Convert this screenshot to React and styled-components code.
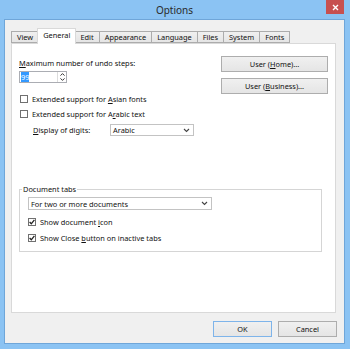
import styled, { createGlobalStyle } from "styled-components";

const GlobalStyle = createGlobalStyle`
  html, body {
    margin: 0;
    padding: 0;
  }
  body {
    width: 350px;
    height: 349px;
    overflow: hidden;
    font-family: "Noto Sans", "Open Sans", sans-serif;
  }
`;

const tabs = ["View", "General", "Edit", "Appearance", "Language", "Files", "System", "Fonts"];

const Chevron = () => (
  <svg width="7" height="5" viewBox="0 0 7 5">
    <path d="M1 1 L3.5 3.5 L6 1" fill="none" stroke="#444" strokeWidth="1.1" />
  </svg>
);

const Check = () => (
  <svg width="6" height="6" viewBox="0 0 6 6">
    <path d="M0.6 3 L2.3 4.8 L5.4 0.8" fill="none" stroke="#222" strokeWidth="1.3" />
  </svg>
);

const App = () => {
  return (
    <>
      <GlobalStyle />
      <Window>
        <TitleBar>
          <Title>Options</Title>
          <CloseButton>
            <svg width="7" height="7" viewBox="0 0 7 7">
              <path d="M1 1 L6 6 M6 1 L1 6" stroke="#ffffff" strokeWidth="1.4" />
            </svg>
          </CloseButton>
        </TitleBar>
        <Client>
          <TabStrip>
            {tabs.map((t) => (
              <Tab key={t} $active={t === "General"}>
                {t}
              </Tab>
            ))}
          </TabStrip>
          <Panel>
            <TopRow>
              <LeftColumn>
                <FieldLabel>
                  <Key>M</Key>aximum number of undo steps:
                </FieldLabel>
                <SpinBox>
                  <SpinText>
                    <Selected>99</Selected>
                  </SpinText>
                  <SpinArrows>
                    <svg width="5" height="3" viewBox="0 0 5 3">
                      <path d="M0.5 2.6 L2.5 0.6 L4.5 2.6" fill="none" stroke="#333" strokeWidth="1" />
                    </svg>
                    <svg width="5" height="3" viewBox="0 0 5 3">
                      <path d="M0.5 0.4 L2.5 2.4 L4.5 0.4" fill="none" stroke="#333" strokeWidth="1" />
                    </svg>
                  </SpinArrows>
                </SpinBox>
                <CheckRow $first>
                  <Box />
                  <span>
                    Extended support for <Key>A</Key>sian fonts
                  </span>
                </CheckRow>
                <CheckRow>
                  <Box />
                  <span>
                    Extended support for A<Key>r</Key>abic text
                  </span>
                </CheckRow>
                <DigitsRow>
                  <DigitsLabel>
                    <Key>D</Key>isplay of digits:
                  </DigitsLabel>
                  <Select $width={84} $height={12}>
                    <span>Arabic</span>
                    <Chevron />
                  </Select>
                </DigitsRow>
              </LeftColumn>
              <ButtonColumn>
                <Button $width={107}>
                  <span>
                    User (<Key>H</Key>ome)...
                  </span>
                </Button>
                <Button $width={107}>
                  <span>
                    User (<Key>B</Key>usiness)...
                  </span>
                </Button>
              </ButtonColumn>
            </TopRow>
            <Group>
              <Legend>Document tabs</Legend>
              <Select $width={184} $height={13}>
                <span>For two or more documents</span>
                <Chevron />
              </Select>
              <GroupCheck $first>
                <Box>
                  <Check />
                </Box>
                <span>
                  Show document <Key>i</Key>con
                </span>
              </GroupCheck>
              <GroupCheck>
                <Box>
                  <Check />
                </Box>
                <span>
                  Show Close <Key>b</Key>utton on inactive tabs
                </span>
              </GroupCheck>
            </Group>
          </Panel>
          <Footer>
            <Button $width={59} $default>
              OK
            </Button>
            <Button $width={59}>Cancel</Button>
          </Footer>
        </Client>
      </Window>
    </>
  );
};

export default App;

const Window = styled.div`
  width: 350px;
  height: 349px;
  box-sizing: border-box;
  background: #8bc3f3;
  padding: 0 6px 6px 5px;
  display: flex;
  flex-direction: column;
  font-size: 7.4px;
  color: #111;
`;

const TitleBar = styled.div`
  flex: none;
  height: 20px;
  display: flex;
  align-items: flex-start;
  padding-left: 18px;
`;

const Title = styled.div`
  flex: 1;
  text-align: center;
  font-size: 10px;
  line-height: 20px;
  color: #2a2a2a;
`;

const CloseButton = styled.div`
  flex: none;
  width: 18px;
  height: 14px;
  background-color: #c75050;
  display: flex;
  align-items: center;
  justify-content: center;
`;

const Client = styled.div`
  flex: 1;
  background: #f0f0f0;
  box-shadow: 0 0 0 1px #6fa6d9;
  padding: 8px 8px 6px 6px;
  display: flex;
  flex-direction: column;
`;

const TabStrip = styled.div`
  display: flex;
  align-items: flex-end;
  height: 15px;
`;

const Tab = styled.div`
  position: relative;
  box-sizing: border-box;
  height: ${(p) => (p.$active ? "16px" : "12px")};
  margin-bottom: ${(p) => (p.$active ? "-1px" : "0")};
  margin-left: ${(p) => (p.$active ? "-2px" : "-1px")};
  margin-right: ${(p) => (p.$active ? "-1px" : "0")};
  padding: 0 ${(p) => (p.$active ? "5px" : "5px")};
  border: 1px solid ${(p) => (p.$active ? "#d9d9d9" : "#acacac")};
  border-bottom: ${(p) => (p.$active ? "none" : "1px solid #acacac")};
  background: ${(p) => (p.$active ? "#fff" : "linear-gradient(#f0f0f0, #e5e5e5)")};
  z-index: ${(p) => (p.$active ? 1 : 0)};
  line-height: ${(p) => (p.$active ? "13px" : "10px")};
  white-space: nowrap;

  &:first-child {
    margin-left: 0;
  }
`;

const Panel = styled.div`
  flex: 1;
  background: #fff;
  border: 1px solid #d9d9d9;
  padding: 12px 7px 0 7px;
  display: flex;
  flex-direction: column;
`;

const TopRow = styled.div`
  display: flex;
  justify-content: space-between;
  align-items: flex-start;
`;

const LeftColumn = styled.div`
  display: flex;
  flex-direction: column;
`;

const FieldLabel = styled.div`
  margin-top: 2px;
  line-height: 10px;
`;

const Key = styled.span`
  text-decoration: underline;
`;

const SpinBox = styled.div`
  margin-top: 3px;
  width: 48px;
  height: 12px;
  box-sizing: border-box;
  border: 1px solid #abadb3;
  display: flex;
`;

const SpinText = styled.div`
  flex: 1;
  padding: 0 1px;
  line-height: 10px;
`;

const Selected = styled.span`
  background: #3399ff;
  color: #fff;
`;

const SpinArrows = styled.div`
  width: 8px;
  border-left: 1px solid #dcdcdc;
  display: flex;
  flex-direction: column;
  align-items: center;
  justify-content: space-around;
`;

const CheckRow = styled.label`
  margin-top: ${(p) => (p.$first ? "8px" : "0")};
  height: 15px;
  display: flex;
  align-items: center;
  gap: 4px;
  padding-left: 1px;
  white-space: nowrap;
`;

const Box = styled.span`
  width: 8px;
  height: 8px;
  box-sizing: border-box;
  border: 1px solid #707070;
  background: #fff;
  display: flex;
  align-items: center;
  justify-content: center;
`;

const DigitsRow = styled.div`
  margin-top: 3px;
  display: flex;
  align-items: center;
  padding-left: 14px;
`;

const DigitsLabel = styled.span`
  width: 77px;
`;

const Select = styled.div`
  width: ${(p) => p.$width}px;
  height: ${(p) => p.$height}px;
  box-sizing: border-box;
  border: 1px solid #c3c3c3;
  background: #fff;
  display: flex;
  align-items: center;
  justify-content: space-between;
  padding: 0 3px 0 2px;
  white-space: nowrap;
`;

const ButtonColumn = styled.div`
  display: flex;
  flex-direction: column;
  gap: 6px;
`;

const Button = styled.div`
  width: ${(p) => p.$width}px;
  height: 16px;
  box-sizing: border-box;
  border: 1px solid ${(p) => (p.$default ? "#7eb4ea" : "#adadad")};
  background: linear-gradient(#f0f0f0, #e5e5e5);
  display: flex;
  align-items: center;
  justify-content: center;
  white-space: nowrap;
`;

const Group = styled.fieldset`
  margin: 48px 6px 0 0;
  padding: 0 0 5px 8px;
  border: 1px solid #d5d5d5;
  min-width: 0;
`;

const Legend = styled.legend`
  margin-left: -6px;
  padding: 0 1px;
  line-height: 10px;
  margin-bottom: 3px;
`;

const GroupCheck = styled(CheckRow)`
  margin-top: ${(p) => (p.$first ? "4px" : "0")};
  height: 16px;
  padding-left: 0;
`;

const Footer = styled.div`
  margin-top: 8px;
  margin-right: -1px;
  display: flex;
  justify-content: flex-end;
  gap: 6px;
`;
